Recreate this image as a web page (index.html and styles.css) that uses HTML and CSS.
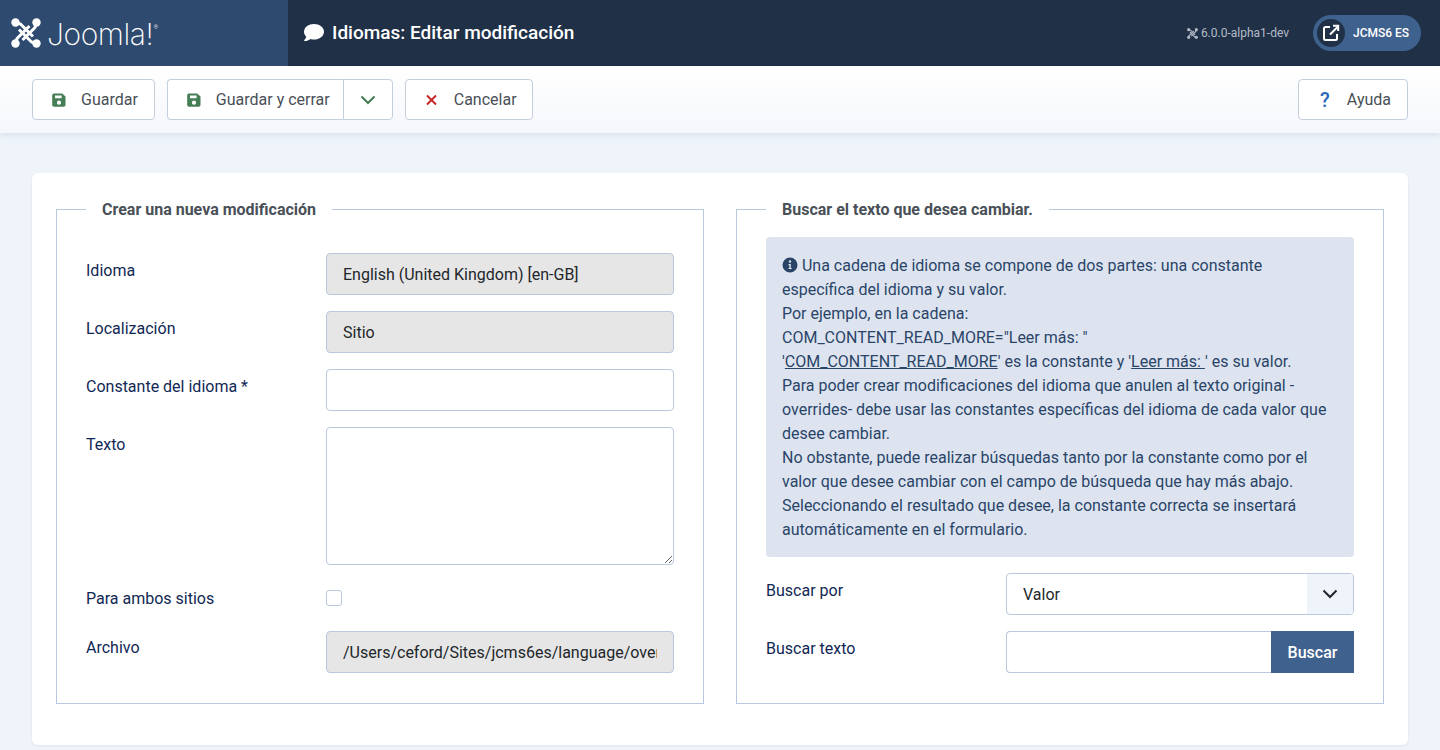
FILE: index.html
```html
<!DOCTYPE html>
<html lang="es">
<head>
  <meta charset="UTF-8" />
  <meta name="viewport" content="width=device-width, initial-scale=1.0"/>
  <title>Idiomas: Editar modificación</title>
  <link rel="stylesheet" href="styles.css">
</head>
<body>
  <svg class="defs" width="0" height="0">
    <symbol id="joomla" viewBox="0 0 30 30">
      <g fill="none" stroke="currentColor" stroke-width="3">
        <path d="M4.500 4.500 9.500 6 22 18.500"/>
        <path d="M25.500 4.500 24 9.500 11.500 22"/>
        <path d="M25.500 25.500 20.500 24 8 11.500"/>
        <path d="M4.500 25.500 6 20.500 18.500 8"/>
      </g>
      <circle cx="4.500" cy="4.500" r="4.200" fill="currentColor"/>
      <circle cx="25.500" cy="4.500" r="4.200" fill="currentColor"/>
      <circle cx="4.500" cy="25.500" r="4.200" fill="currentColor"/>
      <circle cx="25.500" cy="25.500" r="4.200" fill="currentColor"/>
    </symbol>
    <symbol id="save" viewBox="0 0 14 14">
      <path fill="currentColor" fill-rule="evenodd" d="M2 0.500h8.200l3.300 3.100V12a1.800 1.800 0 0 1-1.800 1.800H2A1.800 1.800 0 0 1 .2 12V2.300A1.800 1.800 0 0 1 2 .5zM3 2.500v2.800h6.600V2.500zM7 7.600a2.100 2.100 0 1 0 0 4.200 2.100 2.100 0 0 0 0-4.200z"/>
    </symbol>
  </svg>

  <header class="topbar">
    <div class="brand">
      <svg class="brand-mark"><use href="#joomla"/></svg>
      <span class="brand-name">Joomla!</span><span class="brand-reg">®</span>
    </div>
    <div class="page-title">
      <svg class="title-icon" viewBox="0 0 20 18"><path fill="currentColor" d="M10 0C4.500 0 0 3.400 0 7.700c0 1.900.9 3.600 2.300 5-.5 1.800-1.900 3.300-2 3.400-.2.200-.2.400-.1.600.1.200.3.300.5.300 2.700 0 4.700-1.300 5.700-2.100 1.100.4 2.300.6 3.600.6 5.500 0 10-3.400 10-7.800S15.500 0 10 0z"/></svg>
      <h1>Idiomas: Editar modificación</h1>
    </div>
    <div class="top-right">
      <span class="version">
        <svg class="version-icon"><use href="#joomla"/></svg>
        6.0.0-alpha1-dev
      </span>
      <a class="site-link" href="#">
        <span class="site-icon">
          <svg viewBox="0 0 18 18" width="18" height="18" fill="none" stroke="currentColor" stroke-width="2"><path d="M8 3H3.500A1.500 1.500 0 0 0 2 4.500v10A1.500 1.500 0 0 0 3.500 16h10a1.500 1.500 0 0 0 1.500-1.500V10"/><path d="M8 10.500 16 2.500"/><path d="M11 1.800h5.200V7" /></svg>
        </span>
        <span>JCMS6 ES</span>
      </a>
    </div>
  </header>

  <nav class="toolbar">
    <button class="tbtn"><svg class="ico green"><use href="#save"/></svg>Guardar</button>
    <div class="split">
      <button class="tbtn"><svg class="ico green"><use href="#save"/></svg>Guardar y cerrar</button>
      <button class="tbtn caret">
        <svg viewBox="0 0 16 10" width="16" height="10" fill="none" stroke="#457d54" stroke-width="2"><path d="M1.500 1.500 8 8l6.500-6.500"/></svg>
      </button>
    </div>
    <button class="tbtn cancel">
      <svg class="ico" viewBox="0 0 14 14" fill="none" stroke="#c52827" stroke-width="2"><path d="M2 2.500l9 9M11 2.500l-9 9"/></svg>
      Cancelar
    </button>
    <button class="tbtn help"><span class="qmark">?</span>Ayuda</button>
  </nav>

  <main class="content">
    <section class="card">
      <fieldset class="panel">
        <legend>Crear una nueva modificación</legend>
        <div class="form form-left">
          <div class="row">
            <label>Idioma</label>
            <input class="field" type="text" readonly value="English (United Kingdom) [en-GB]">
          </div>
          <div class="row">
            <label>Localización</label>
            <input class="field" type="text" readonly value="Sitio">
          </div>
          <div class="row">
            <label>Constante del idioma *</label>
            <input class="field" type="text">
          </div>
          <div class="row">
            <label>Texto</label>
            <textarea class="field area"></textarea>
          </div>
          <div class="row">
            <label>Para ambos sitios</label>
            <input class="check" type="checkbox">
          </div>
          <div class="row">
            <label class="label-file">Archivo</label>
            <input class="field" type="text" readonly value="/Users/ceford/Sites/jcms6es/language/overrides/en-GB.override.ini">
          </div>
        </div>
      </fieldset>

      <fieldset class="panel">
        <legend>Buscar el texto que desea cambiar.</legend>
        <div class="info">
          <svg class="info-icon" viewBox="0 0 16 16"><path fill="currentColor" fill-rule="evenodd" d="M8 .5a7.500 7.500 0 1 1 0 15 7.500 7.500 0 0 1 0-15zM8 3.300a1.200 1.200 0 1 0 0 2.400 1.200 1.200 0 0 0 0-2.400zM6.500 7v1.200h.9v2.700h-.9v1.200h3.200v-1.200h-.9V7z"/></svg>
          Una cadena de idioma se compone de dos partes: una constante específica del idioma y su valor.<br>
          Por ejemplo, en la cadena:<br>
          COM_CONTENT_READ_MORE="Leer más: "<br>
          '<u>COM_CONTENT_READ_MORE</u>' es la constante y '<u>Leer más: </u>' es su valor.<br>
          Para poder crear modificaciones del idioma que anulen al texto original -overrides- debe usar las constantes específicas del idioma de cada valor que desee cambiar.<br>
          No obstante, puede realizar búsquedas tanto por la constante como por el valor que desee cambiar con el campo de búsqueda que hay más abajo.<br>
          Seleccionando el resultado que desee, la constante correcta se insertará automáticamente en el formulario.
        </div>
        <div class="form">
          <div class="row">
            <label>Buscar por</label>
            <div class="select-wrap">
              <select class="field select">
                <option>Valor</option>
              </select>
              <span class="select-arrow">
                <svg viewBox="0 0 16 10" width="16" height="10" fill="none" stroke="#22262a" stroke-width="2"><path d="M1.500 1.500 8 8l6.500-6.500"/></svg>
              </span>
            </div>
          </div>
          <div class="row">
            <label>Buscar texto</label>
            <div class="search">
              <input class="field search-input" type="text">
              <button class="search-btn">Buscar</button>
            </div>
          </div>
        </div>
      </fieldset>
    </section>
  </main>
</body>
</html>
```

FILE: styles.css
```css
* { box-sizing: border-box; }
html, body { height: 750px; overflow: hidden; }
body { margin: 0; background: #eff4fb; color: #22262a; font-family: Roboto, "Liberation Sans", sans-serif; font-size: 16px; line-height: 24px; }
.defs { position: absolute; }

.topbar { display: flex; align-items: center; height: 66px; background: #1f3047; color: white; }
.brand { display: flex; align-items: flex-start; width: 288px; height: 66px; padding: 18px 0 0 11px; background: #2f4a6f; }
.brand-mark { width: 30px; height: 30px; }
.brand-name { margin: -1px 0 0 6px; font-family: Inter, sans-serif; font-weight: 200; font-size: 30px; line-height: 34px; letter-spacing: -0.4px; }
.brand-reg { margin-top: 5px; font-size: 6px; line-height: 8px; color: #d5dbe4; }
.page-title { display: flex; align-items: center; gap: 8px; padding-left: 16px; }
.title-icon { width: 20px; height: 18px; }
h1 { margin: 0; font-size: 19px; font-weight: 500; line-height: 24px; }
.top-right { display: flex; align-items: center; margin-left: auto; padding-right: 19px; }
.version { display: flex; align-items: center; gap: 3px; margin-right: 24px; font-size: 12px; color: #b4bcc8; }
.version-icon { width: 11px; height: 11px; }
.site-link { display: flex; align-items: center; gap: 8px; width: 108px; height: 36px; padding-left: 4px; border-radius: 18px; background: #3f618e; color: white; font-size: 12px; font-weight: 500; text-decoration: none; }
.site-icon { display: flex; align-items: center; justify-content: center; width: 28px; height: 28px; border-radius: 50%; background: #1f3047; }

.toolbar { display: flex; gap: 12px; height: 67px; padding: 13px 32px; background: linear-gradient(#fff, #f5f7fb); box-shadow: 0 2px 6px rgba(40,60,90,0.1); }
.tbtn { display: flex; align-items: center; height: 41px; padding: 0 16px 0 19px; border: 1px solid #c4cfde; border-radius: 4px; background: white; color: #495057; font-family: inherit; font-size: 16px; cursor: pointer; }
.ico { width: 14px; height: 14px; margin-right: 15px; flex: none; }
.green { color: #457d54; }
.split { display: flex; }
.split .tbtn:first-child { padding-right: 13px; border-right: 0; border-radius: 4px 0 0 4px; }
.caret { width: 50px; padding: 0; justify-content: center; border-radius: 0 4px 4px 0; }
.cancel { padding-right: 15px; }
.help { margin-left: auto; }
.qmark { width: 14px; margin-right: 15px; color: #2a69b8; font-size: 20px; font-weight: 500; text-align: center; }

.content { padding: 40px 32px 0; }
.card { display: grid; grid-template-columns: 1fr 1fr; gap: 32px; height: 572px; padding: 24px; border-radius: 6px; background: white; box-shadow: 0 1px 3px rgba(40,60,90,0.08); }
.panel { min-width: 0; height: 507px; margin: 0; padding: 16px 29px 0; border: 1px solid #b9c8de; }
legend { margin-left: 0; padding: 2px 16px 0; color: #495057; font-size: 16px; font-weight: 700; line-height: 22px; }

.form { display: flex; flex-direction: column; gap: 16px; }
.form-left { margin-top: 16px; }
.row { display: grid; grid-template-columns: 240px 1fr; }
label { padding: 6px 0 4px; color: #112855; }
.label-file { padding-top: 5px; }
.field { display: block; width: 100%; height: 42px; padding: 0 16px; border: 1px solid #b9c8de; border-radius: 4px; background: white; color: #22262a; font-family: inherit; font-size: 16px; }
.field[readonly] { background: #e6e6e6; }
.area { height: 138px; padding: 8px 16px; }
.check { width: 16px; height: 16px; margin: 9px 0; appearance: none; border: 1px solid #b9c8de; border-radius: 3px; background: white; }

.info { margin-bottom: 16px; padding: 17px 16px 15px; border-radius: 4px; background: #dde4f0; color: #2a4468; }
.info-icon { width: 16px; height: 16px; vertical-align: -2px; }

.select-wrap { position: relative; }
.select { appearance: none; }
.select-arrow { position: absolute; top: 1px; right: 1px; bottom: 1px; display: flex; align-items: center; justify-content: center; width: 46px; border-radius: 0 3px 3px 0; background: #eff4fb; pointer-events: none; }
.search { display: flex; }
.search-input { flex: 1; min-width: 0; border-right: 0; border-radius: 4px 0 0 4px; }
.search-btn { width: 83px; border: 0; background: #3f618e; color: white; font-family: inherit; font-size: 16px; font-weight: 500; }
```
